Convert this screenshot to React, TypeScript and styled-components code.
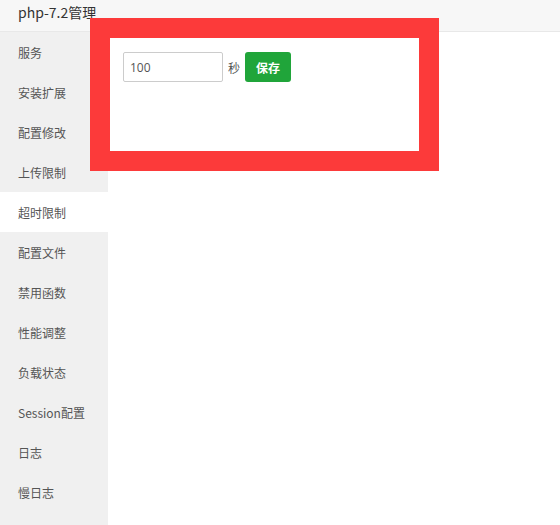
import React from "react";
import styled, { createGlobalStyle } from "styled-components";

const GlobalStyle = createGlobalStyle`
  html, body { margin: 0; padding: 0; background: #fff; }
  body {
    font-family: "Open Sans", "Noto Sans CJK SC", sans-serif;
    width: 560px;
    height: 525px;
    overflow: hidden;
  }
  * { box-sizing: border-box; }
`;

const Page = styled.div`
  position: relative;
  width: 560px;
  height: 525px;
  display: flex;
  flex-direction: column;
`;

const Header = styled.div`
  height: 32px;
  background: #f7f7f7;
  border-bottom: 1px solid #e8e8e8;
  padding-left: 18px;
  font-size: 14px;
  line-height: 24px;
  color: #333;
  font-family: "Noto Sans CJK SC", sans-serif;
`;

const Body = styled.div`
  flex: 1;
  display: flex;
`;

const Sidebar = styled.ul`
  list-style: none;
  margin: 0;
  padding: 0;
  width: 108px;
  background: #f0f0f0;
`;

const NavItem = styled.li<{ $active?: boolean }>`
  height: 40px;
  line-height: 42px;
  padding-left: 18px;
  font-size: 12px;
  color: #555;
  font-family: "Noto Sans CJK SC", sans-serif;
  background: ${(p) => (p.$active ? "#fff" : "transparent")};
  cursor: pointer;
`;

const Content = styled.div`
  flex: 1;
  padding: 20px 15px;
`;

const FormRow = styled.div`
  display: flex;
  align-items: center;
`;

const Input = styled.input`
  width: 100px;
  height: 30px;
  border: 1px solid #ccc;
  border-radius: 2px;
  padding: 0 6px;
  font-size: 12px;
  color: #555;
  font-family: "Open Sans", sans-serif;
  outline: none;
`;

const Unit = styled.span`
  margin: 0 5px 0 5px;
  font-size: 12px;
  color: #555;
  font-family: "Noto Sans CJK SC", sans-serif;
`;

const SaveButton = styled.button`
  width: 46px;
  height: 30px;
  border: none;
  border-radius: 3px;
  background: #20a53a;
  color: #fff;
  font-size: 12px;
  font-weight: bold;
  font-family: "Noto Sans CJK SC", sans-serif;
  padding: 0;
  cursor: pointer;
`;

const Highlight = styled.div`
  position: absolute;
  left: 90px;
  top: 18px;
  width: 349px;
  height: 153px;
  border: 20px solid #fc3a3a;
  pointer-events: none;
`;

const items = [
  "服务",
  "安装扩展",
  "配置修改",
  "上传限制",
  "超时限制",
  "配置文件",
  "禁用函数",
  "性能调整",
  "负载状态",
  "Session配置",
  "日志",
  "慢日志",
];

export default function App() {
  return (
    <>
      <GlobalStyle />
      <Page>
        <Header>php-7.2管理</Header>
        <Body>
          <Sidebar>
            {items.map((t) => (
              <NavItem key={t} $active={t === "超时限制"}>
                {t}
              </NavItem>
            ))}
          </Sidebar>
          <Content>
            <FormRow>
              <Input defaultValue="100" />
              <Unit>秒</Unit>
              <SaveButton>保存</SaveButton>
            </FormRow>
          </Content>
        </Body>
        <Highlight />
      </Page>
    </>
  );
}
